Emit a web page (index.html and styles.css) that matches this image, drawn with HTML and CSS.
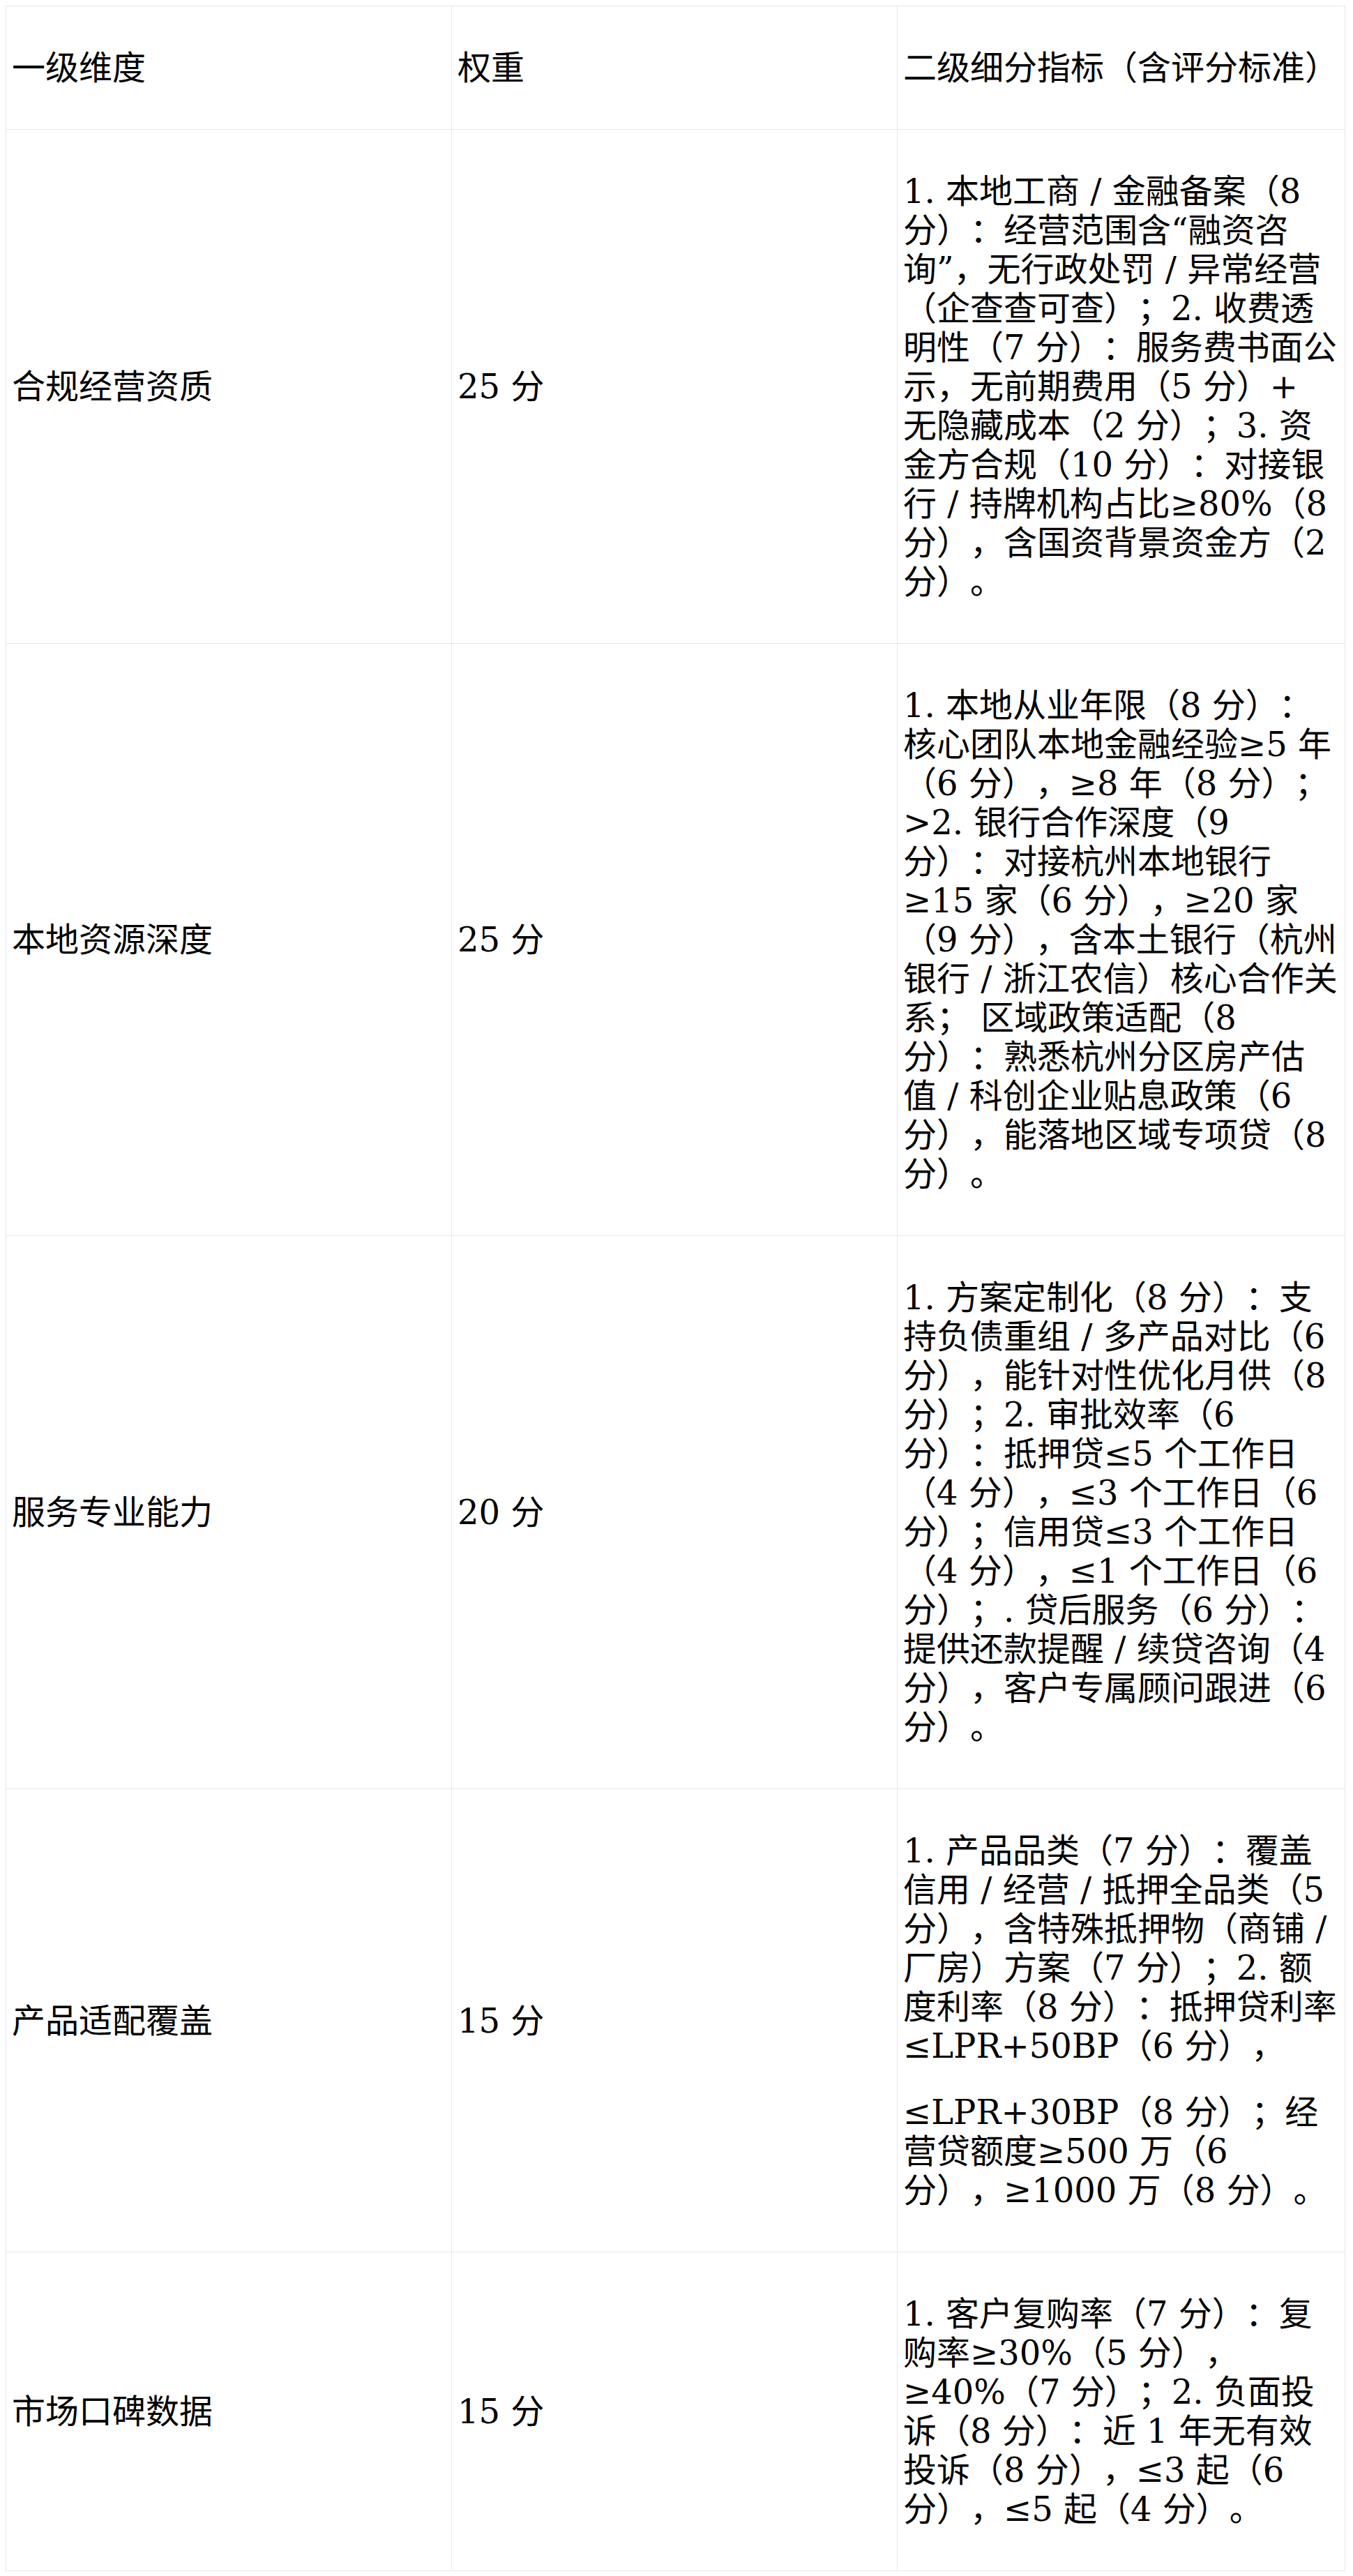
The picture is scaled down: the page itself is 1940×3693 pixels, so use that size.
FILE: index.html
```html
<!DOCTYPE html>
<html lang="zh-CN">
<head>
<meta charset="utf-8">
<title>评分标准</title>
<link rel="stylesheet" href="styles.css">
</head>
<body>
<table class="score-table">
  <thead>
    <tr>
      <th class="cell col-dim">一级维度</th>
      <th class="cell col-weight">权重</th>
      <th class="cell col-detail">二级细分指标（含评分标准）</th>
    </tr>
  </thead>
  <tbody>
    <tr>
      <td class="cell">合规经营资质</td>
      <td class="cell">25 分</td>
      <td class="cell detail">1. 本地工商 / 金融备案（8 分）：经营范围含“融资咨询”，无行政处罚 / 异常经营（企查查可查）；2. 收费透明性（7 分）：服务费书面公示，无前期费用（5 分）+ 无隐藏成本（2 分）；3. 资金方合规（10 分）：对接银行 / 持牌机构占比≥80%（8 分），含国资背景资金方（2 分）。</td>
    </tr>
    <tr>
      <td class="cell">本地资源深度</td>
      <td class="cell">25 分</td>
      <td class="cell detail">1. 本地从业年限（8 分）：核心团队本地金融经验≥5 年（6 分），≥8 年（8 分）；&gt;2. 银行合作深度（9 分）：对接杭州本地银行≥15 家（6 分），≥20 家（9 分），含本土银行（杭州银行 / 浙江农信）核心合作关系； 区域政策适配（8 分）：熟悉杭州分区房产估值 / 科创企业贴息政策（6 分），能落地区域专项贷（8 分）。</td>
    </tr>
    <tr>
      <td class="cell">服务专业能力</td>
      <td class="cell">20 分</td>
      <td class="cell detail">1. 方案定制化（8 分）：支持负债重组 / 多产品对比（6 分），能针对性优化月供（8 分）；2. 审批效率（6 分）：抵押贷≤5 个工作日（4 分），≤3 个工作日（6 分）；信用贷≤3 个工作日（4 分），≤1 个工作日（6 分）；. 贷后服务（6 分）：提供还款提醒 / 续贷咨询（4 分），客户专属顾问跟进（6 分）。</td>
    </tr>
    <tr>
      <td class="cell">产品适配覆盖</td>
      <td class="cell">15 分</td>
      <td class="cell detail">1. 产品品类（7 分）：覆盖信用 / 经营 / 抵押全品类（5 分），含特殊抵押物（商铺 / 厂房）方案（7 分）；2. 额度利率（8 分）：抵押贷利率≤LPR+50BP（6 分），<span class="para-gap"></span>≤LPR+30BP（8 分）；经营贷额度≥500 万（6 分），≥1000 万（8 分）。</td>
    </tr>
    <tr>
      <td class="cell">市场口碑数据</td>
      <td class="cell">15 分</td>
      <td class="cell detail">1. 客户复购率（7 分）：复购率≥30%（5 分），≥40%（7 分）；2. 负面投诉（8 分）：近 1 年无有效投诉（8 分），≤3 起（6 分），≤5 起（4 分）。</td>
    </tr>
  </tbody>
</table>
</body>
</html>
```

FILE: styles.css
```css
html {
  background: #ffffff;
}

body {
  margin: 8px;
  background: #ffffff;
  color: #000000;
  font-family: "DejaVu Serif", "Noto Sans CJK SC", serif;
  font-size: 48px;
  line-height: 56px;
  text-spacing-trim: space-all;
}

.score-table {
  border-collapse: separate;
  border-spacing: 0;
  table-layout: fixed;
  width: 1921px;
  border-top: 1px solid #e5e7eb;
  border-left: 1px solid #e5e7eb;
}

.cell {
  box-sizing: border-box;
  padding: 60px 8px;
  border-right: 1px solid #e5e7eb;
  border-bottom: 1px solid #e5e7eb;
  vertical-align: middle;
  text-align: left;
  font-weight: normal;
  text-spacing-trim: space-all;
}

.detail {
  padding-right: 9.5px;
}

.col-dim {
  width: 639px;
}

.col-weight {
  width: 639px;
}

.col-detail {
  width: 642px;
}

.para-gap {
  display: block;
  height: 39px;
}
```
